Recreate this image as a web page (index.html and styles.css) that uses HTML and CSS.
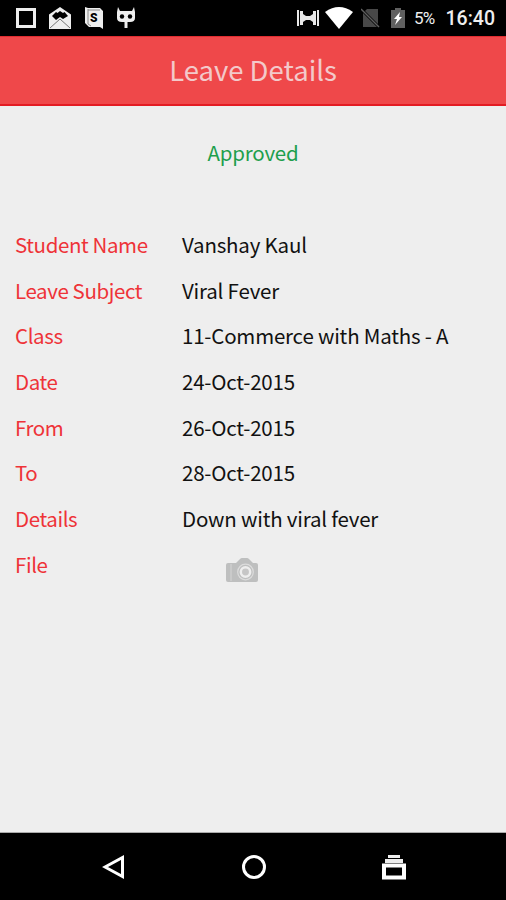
FILE: index.html
```html
<!DOCTYPE html>
<html lang="en">
<head>
    <meta charset="UTF-8">
    <meta name="viewport" content="width=device-width, initial-scale=1.0">
    <title>Leave Details</title>
    <link rel="stylesheet" href="styles.css">
</head>
<body>
    <div class="status-bar">
        <div class="notifications">
            <svg width="20" height="20" viewBox="0 0 20 20"><rect x="1.5" y="1.5" width="17" height="17" fill="none" stroke="#eee" stroke-width="3"/></svg>
            <svg width="24" height="22" viewBox="0 0 24 22">
                <path d="M1 7.500 12 0l11 7.500V22H1z" fill="#eee"/>
                <path d="M4 9l4-4 1.500 1 2.500-2 3 2 1.500-1L20 9l-5 3-3-2-4 3z" fill="#000"/>
                <path d="M2 21l10-9 10 9" fill="none" stroke="#777"/>
            </svg>
            <svg width="20" height="24" viewBox="0 0 20 24">
                <path d="M1 1l3 1h12l3 3v18l-3-2H5l-4-4z" fill="#eee"/>
                <path d="M4 3v15l3 2M4 4h12" fill="none" stroke="#888"/>
                <text class="badge-letter" x="6" y="16">S</text>
            </svg>
            <svg width="20" height="24" viewBox="0 0 20 24">
                <path d="M2 1l2 4h12l2-4 1 5v6q0 4-5 4h-2.500v6h-3v-6H6q-5 0-5-4V6z" fill="#eee"/>
                <circle cx="6" cy="10.500" r="2.200"/><circle cx="14" cy="10.500" r="2.200"/>
            </svg>
        </div>
        <div class="indicators">
            <svg class="vibrate" width="22" height="20" viewBox="0 0 22 20">
                <path d="M0 2h2v16H0zM3 3h3v14H3zM16 3h3v14h-3zM20 2h2v16h-2z" fill="#e8e8e8"/>
                <path d="M6 6l3 2h4l3-2v8l-3-2H9l-3 2z" fill="#e8e8e8"/>
            </svg>
            <svg class="wifi" width="28" height="22" viewBox="0 0 28 22"><path d="M0 5Q14-5 28 5L14 22z" fill="#fff"/></svg>
            <svg class="no-sim" width="20" height="20" viewBox="0 0 20 20">
                <path d="M6 1h11v15L4 3zM2 5l14 14H2z" fill="#484848"/>
                <path d="M0 1l18 18" stroke="#606060" stroke-width="1.500"/>
            </svg>
            <svg class="battery" width="14" height="20" viewBox="0 0 14 20">
                <path d="M0 2h4V0h6v2h4v18H0z" fill="#606060"/>
                <path d="M9 4l-6 7h3l-2 6 7-8H8z" fill="#fff"/>
            </svg>
            <span class="percent">5%</span>
            <span class="clock">16:40</span>
        </div>
    </div>

    <header class="title-bar">
        <h1>Leave Details</h1>
    </header>

    <main class="content">
        <p class="approval">Approved</p>
        <dl class="details">
            <dt>Student Name</dt>
            <dd>Vanshay Kaul</dd>
            <dt>Leave Subject</dt>
            <dd>Viral Fever</dd>
            <dt>Class</dt>
            <dd>11-Commerce with Maths - A</dd>
            <dt>Date</dt>
            <dd>24-Oct-2015</dd>
            <dt>From</dt>
            <dd>26-Oct-2015</dd>
            <dt>To</dt>
            <dd>28-Oct-2015</dd>
            <dt>Details</dt>
            <dd>Down with viral fever</dd>
            <dt>File</dt>
            <dd class="file">
                <svg width="34" height="26" viewBox="0 0 34 26">
                    <path d="M3 6h8l4-4q1-1 2-1h5q1 0 2 1l4 4h3q2 0 2 2v15q0 2-2 2H3q-2 0-2-2V8q0-2 2-2z" fill="#bebfbf"/>
                    <path d="M6 7v17" stroke="#d5d5d5"/>
                    <circle cx="20.500" cy="15" r="7.800" fill="#bebfbf" stroke="#dcdcdc" stroke-width="1.200"/>
                    <circle cx="20.500" cy="15" r="4.700" fill="#c6c6c6" stroke="#eee" stroke-width="2.500"/>
                </svg>
            </dd>
        </dl>
    </main>

    <nav class="nav-bar">
        <svg width="24" height="26" viewBox="0 0 24 26"><path d="M3 13l17.500-9.500v19z" fill="none" stroke="#fff" stroke-width="3"/></svg>
        <svg width="26" height="26" viewBox="0 0 26 26"><circle cx="13" cy="13" r="10.500" fill="none" stroke="#fff" stroke-width="3"/></svg>
        <svg width="26" height="26" viewBox="0 0 26 26">
            <path d="M7 1h12v3H7zM4 5h18v4H4z" fill="#eee"/>
            <path d="M3 11.500h20v12H3z" fill="none" stroke="#fff" stroke-width="4"/>
        </svg>
    </nav>
</body>
</html>
```

FILE: styles.css
```css
* {
    box-sizing: border-box;
}
body {
    display: flex;
    flex-direction: column;
    height: 100vh;
    margin: 0;
    background-color: #eee;
    font-family: "Noto Sans CJK JP", "Noto Sans", sans-serif;
    overflow: hidden;
}
svg {
    display: block;
    flex-shrink: 0;
}
.status-bar {
    display: flex;
    justify-content: space-between;
    flex-shrink: 0;
    height: 36px;
    padding: 0 11px 0 16px;
    background: #000;
    color: #eee;
    font-family: Roboto, sans-serif;
}
.notifications,
.indicators {
    display: flex;
    align-items: center;
}
.notifications {
    gap: 12px;
}
.badge-letter {
    font-size: 12px;
    font-weight: 900;
}
.wifi {
    margin-left: 6px;
}
.no-sim {
    margin-left: 8px;
}
.battery {
    margin-left: 10px;
}
.percent {
    margin-left: 9px;
    font-size: 17px;
    letter-spacing: -0.8px;
}
.clock {
    margin-left: 11px;
    font-size: 19.5px;
    font-weight: 500;
    line-height: 20px;
    padding-top: 2px;
}
.title-bar {
    display: flex;
    justify-content: center;
    flex-shrink: 0;
    height: 70px;
    padding-top: 12px;
    background: #ef484a;
    border-top: 1px solid #e02c30;
    border-bottom: 2px solid #e31b23;
}
.title-bar h1 {
    margin: 0;
    color: #f3c9ca;
    font-size: 27.5px;
    font-weight: 400;
    line-height: 40px;
}
.content {
    flex: 1;
    border-bottom: 1px solid #aaa;
}
.approval {
    margin: 30px 0 0;
    color: #1e9f4d;
    font-size: 20.5px;
    line-height: 32px;
    letter-spacing: -0.2px;
    text-align: center;
}
.details {
    display: grid;
    grid-template-columns: 167px 1fr;
    grid-auto-rows: 45.7px;
    align-items: center;
    margin: 53px 0 0;
    padding-left: 15px;
    font-size: 20.5px;
    line-height: 32px;
}
.details dt {
    color: #ee3338;
    letter-spacing: -0.4px;
}
.details dd {
    margin: 0;
    color: #111;
    letter-spacing: -0.2px;
}
.details .file {
    padding: 12px 0 0 43px;
}
.nav-bar {
    display: flex;
    align-items: center;
    justify-content: space-between;
    flex-shrink: 0;
    height: 67px;
    padding: 0 99px 0 102px;
    background: #000;
}
```
